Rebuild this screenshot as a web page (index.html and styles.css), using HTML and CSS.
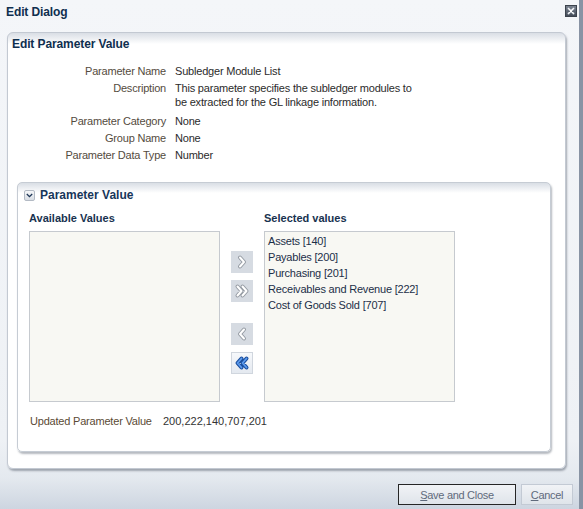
FILE: index.html
```html
<!DOCTYPE html>
<html>
<head>
<meta charset="utf-8">
<link rel="stylesheet" href="styles.css">
</head>
<body>
<div class="dialog">
  <div class="titlebar">
    <span class="title">Edit Dialog</span>
    <span class="close"><svg width="12" height="12" viewBox="0 0 12 12"><path d="M3 3L9 9M9 3L3 9" stroke="#c9ced6" stroke-width="2.4" stroke-linecap="round"/><path d="M3 3L9 9M9 3L3 9" stroke="#fff" stroke-width="1.2" stroke-linecap="round"/></svg></span>
  </div>
  <div class="panel">
    <div class="panel-head">Edit Parameter Value</div>
    <div class="form">
      <div class="lbl">Parameter Name</div><div class="val">Subledger Module List</div>
      <div class="lbl">Description</div><div class="val desc">This parameter specifies the subledger modules to<br>be extracted for the GL linkage information.</div>
      <div class="lbl">Parameter Category</div><div class="val">None</div>
      <div class="lbl">Group Name</div><div class="val">None</div>
      <div class="lbl">Parameter Data Type</div><div class="val">Number</div>
    </div>
    <div class="box">
      <div class="box-head">
        <span class="disc"><svg width="11" height="11" viewBox="0 0 11 11"><path d="M2.8 4L5.5 6.7L8.2 4" fill="none" stroke="#1d3555" stroke-width="1.3"/></svg></span>
        <span>Parameter Value</span>
      </div>
      <div class="shuttle">
        <div class="col">
          <div class="col-title">Available Values</div>
          <div class="list"></div>
        </div>
        <div class="moves">
          <span class="mv"><svg width="22" height="22" viewBox="0 0 22 22"><path d="M9 6.5L13 11L9 15.5" fill="none" stroke="#959ba3" stroke-width="4" stroke-linejoin="round" stroke-linecap="round"/><path d="M9 6.5L13 11L9 15.5" fill="none" stroke="#fff" stroke-width="2" stroke-linejoin="round" stroke-linecap="round"/></svg></span>
          <span class="mv"><svg width="22" height="22" viewBox="0 0 22 22"><path d="M6.5 6.5L10.5 11L6.5 15.5M11.5 6.5L15.5 11L11.5 15.5" fill="none" stroke="#959ba3" stroke-width="4" stroke-linejoin="round" stroke-linecap="round"/><path d="M6.5 6.5L10.5 11L6.5 15.5M11.5 6.5L15.5 11L11.5 15.5" fill="none" stroke="#fff" stroke-width="2" stroke-linejoin="round" stroke-linecap="round"/></svg></span>
          <span class="mv mv-gap"><svg width="22" height="22" viewBox="0 0 22 22"><path d="M13 6.5L9 11L13 15.5" fill="none" stroke="#959ba3" stroke-width="4" stroke-linejoin="round" stroke-linecap="round"/><path d="M13 6.5L9 11L13 15.5" fill="none" stroke="#fff" stroke-width="2" stroke-linejoin="round" stroke-linecap="round"/></svg></span>
          <span class="mv mv-on"><svg width="22" height="22" viewBox="0 0 22 22"><path d="M10.5 6.5L6.5 11L10.5 15.5M15.5 6.5L11.5 11L15.5 15.5" fill="none" stroke="#1b4f9e" stroke-width="4" stroke-linejoin="round" stroke-linecap="round"/><path d="M10.5 6.5L6.5 11L10.5 15.5M15.5 6.5L11.5 11L15.5 15.5" fill="none" stroke="#5d9cf0" stroke-width="1.8" stroke-linejoin="round" stroke-linecap="round"/></svg></span>
        </div>
        <div class="col">
          <div class="col-title">Selected values</div>
          <div class="list sel">
            <div>Assets [140]</div>
            <div>Payables [200]</div>
            <div>Purchasing [201]</div>
            <div>Receivables and Revenue [222]</div>
            <div>Cost of Goods Sold [707]</div>
          </div>
        </div>
      </div>
      <div class="updated"><span class="ulbl">Updated Parameter Value</span><span class="uval">200,222,140,707,201</span></div>
    </div>
  </div>
  <div class="footer">
    <span class="btn btn-focus"><u>S</u>ave and Close</span>
    <span class="btn btn-cancel"><u>C</u>ancel</span>
  </div>
</div>
</body>
</html>
```
FILE: styles.css
```css
html, body {
  margin: 0;
  padding: 0;
}
body {
  font-family: "Liberation Sans", Arial, sans-serif;
  font-size: 11px;
  letter-spacing: -0.2px;
  color: #2b2b2b;
}
.dialog {
  width: 583px;
  height: 509px;
  box-sizing: border-box;
  border-right: 4px solid #8893a4;
  background: linear-gradient(to bottom, #f4f6f9 0px, #eef1f5 440px, #e4e9ef 478px, #cdd5e0 509px);
  display: flex;
  flex-direction: column;
}
.titlebar {
  height: 32px;
  box-sizing: border-box;
  padding: 5px 2px 0 6px;
  display: flex;
  justify-content: space-between;
  align-items: flex-start;
}
.title {
  font-weight: bold;
  font-size: 12px;
  line-height: 14px;
  letter-spacing: -0.1px;
  color: #0f2f4f;
}
.close {
  width: 12px;
  height: 12px;
  box-sizing: border-box;
  background: linear-gradient(#7a828f, #444c58);
  border: 1px solid #3c434d;
  display: flex;
  align-items: center;
  justify-content: center;
}
.close svg {
  width: 10px;
  height: 10px;
}
.panel {
  margin: 0 13px 0 7px;
  height: 437px;
  box-sizing: border-box;
  border: 1px solid #c3c9d2;
  border-radius: 6px;
  background: linear-gradient(#d9dee5, #ffffff 11px);
  box-shadow: 1px 2px 2px rgba(70, 80, 95, 0.45);
}
.panel-head {
  padding: 4px 0 0 4px;
  font-size: 12px;
  font-weight: bold;
  line-height: 14px;
  letter-spacing: -0.1px;
  color: #0f2f4f;
}
.form {
  display: grid;
  grid-template-columns: 158px auto;
  column-gap: 9px;
  row-gap: 3px;
  margin-top: 13px;
  line-height: 14px;
}
.lbl {
  text-align: right;
  color: #544b40;
}
.val {
  color: #2b2b2b;
}
.desc {
  line-height: 14px;
  margin-bottom: 2px;
}
.box {
  margin: 20px 0 0 9px;
  width: 534px;
  height: 270px;
  box-sizing: border-box;
  border: 1px solid #c6ccd4;
  border-radius: 5px;
  background: linear-gradient(#d9dee5, #ffffff 10px);
  box-shadow: 1px 2px 2px rgba(70, 80, 95, 0.4);
  padding: 5px 0 0 6px;
}
.box-head {
  display: flex;
  align-items: center;
  gap: 5px;
  height: 14px;
  font-size: 12px;
  font-weight: bold;
  letter-spacing: 0;
  color: #17365a;
}
.disc {
  width: 11px;
  height: 11px;
  box-sizing: border-box;
  border: 1px solid #b3bac4;
  border-radius: 2px;
  background: linear-gradient(#f6f7f9, #d8dde4);
  display: flex;
}
.disc svg {
  margin: -1px;
}
.shuttle {
  display: flex;
  margin-top: 9px;
  padding-left: 5px;
}
.col {
  width: 191px;
  display: flex;
  flex-direction: column;
}
.col-title {
  font-weight: bold;
  line-height: 14px;
  letter-spacing: 0;
  color: #17324f;
  margin-bottom: 6px;
}
.list {
  height: 171px;
  box-sizing: border-box;
  border: 1px solid #c6cacf;
  background: #f8f8f3;
}
.sel {
  padding: 1px 0 0 3px;
  line-height: 16px;
  color: #1c2f48;
}
.moves {
  width: 22px;
  margin: 0 11px;
  padding-top: 40px;
  display: flex;
  flex-direction: column;
  gap: 7px;
}
.mv {
  width: 22px;
  height: 22px;
  background: #d6dbe2;
  display: flex;
}
.mv-gap {
  margin-top: 14px;
}
.mv-on {
  background: linear-gradient(#f7f9fc, #e3e8ef);
  box-shadow: inset 0 0 0 1px #d0d6de;
}
.updated {
  margin-top: 12px;
  padding-left: 6px;
  line-height: 14px;
  display: flex;
}
.ulbl {
  width: 133px;
  color: #5a4a35;
}
.uval {
  color: #333;
  letter-spacing: 0;
}
.footer {
  display: flex;
  justify-content: flex-end;
  gap: 5px;
  margin-top: 15px;
  padding-right: 6px;
}
.btn {
  height: 21px;
  box-sizing: border-box;
  display: flex;
  align-items: center;
  justify-content: center;
  color: #5f6a7c;
  letter-spacing: -0.3px;
  background: linear-gradient(#f1f3f6, #dfe4ea);
}
.btn-focus {
  width: 118px;
  border: 1px solid #262626;
}
.btn-cancel {
  width: 52px;
  border: 1px solid #c3cad4;
}
```
